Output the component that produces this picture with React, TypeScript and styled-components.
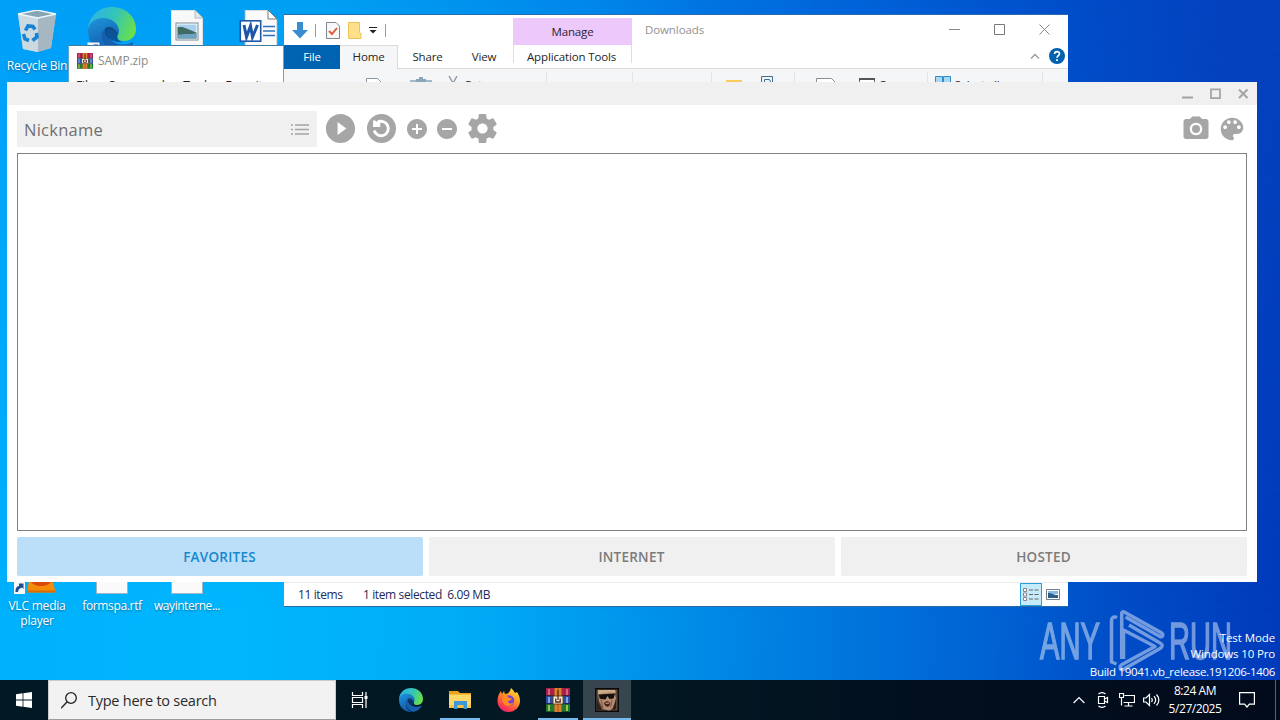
import React from "react";
import styled, { createGlobalStyle, css } from "styled-components";

const GlobalStyle = createGlobalStyle`
  * { box-sizing: border-box; }
  body {
    margin: 0;
    overflow: hidden;
    font-family: "Open Sans", "Noto Sans", sans-serif;
  }
  svg { display: block; flex: none; }
`;

/* ---------- desktop ---------- */

const Screen = styled.div`
  width: 1280px;
  height: 720px;
  display: flex;
  flex-direction: column;
  overflow: hidden;
`;

const Desktop = styled.main`
  position: relative;
  flex: 1;
  overflow: hidden;
  background: linear-gradient(93deg, #00b0fc 0%, #00b6fd 20%, #00adf7 37%, #009aee 48%, #007fe1 62%, #0062d3 78%, #004cc6 88%, #003abb 100%);
  &::before {
    content: "";
    position: absolute;
    inset: 0;
    background: linear-gradient(96deg, #009ff8 0%, #009ff3 24%, #0086ea 44%, #0070e0 54%, #0062d8 64%, #004eca 78%, #0342be 90%, #0340bc 100%);
    mask-image: linear-gradient(180deg, #000 0%, transparent 90%);
  }
`;

const Shortcut = styled.div<{ $x: number; $y: number }>`
  position: absolute;
  left: ${(p) => p.$x}px;
  top: ${(p) => p.$y}px;
  width: 76px;
  display: flex;
  flex-direction: column;
  align-items: center;
`;

const ShortcutLabel = styled.span<{ $spacing?: number }>`
  margin-top: 4px;
  color: #fff;
  font-size: 12px;
  line-height: 15px;
  text-align: center;
  white-space: nowrap;
  letter-spacing: ${(p) => p.$spacing ?? -0.2}px;
  text-shadow: 0 1px 2px rgba(0, 0, 0, 0.4);
`;

/* ---------- windows ---------- */

const Window = styled.section<{ $x: number; $y: number; $w: number; $h: number }>`
  position: absolute;
  left: ${(p) => p.$x}px;
  top: ${(p) => p.$y}px;
  width: ${(p) => p.$w}px;
  height: ${(p) => p.$h}px;
  display: flex;
  flex-direction: column;
  background: #fff;
`;

const ArchiveWindow = styled(Window)`
  border: 1px solid #3d7fa8;
  border-right-color: #8a9aa6;
  border-left-color: #5ba6d2;
`;

const ArchiveTitle = styled.div`
  display: flex;
  align-items: center;
  gap: 5px;
  height: 29px;
  padding-left: 8px;
  color: #8a8a8a;
  font-size: 12px;
  letter-spacing: -0.15px;
`;

const ArchiveMenu = styled.div`
  display: flex;
  gap: 13px;
  padding: 2px 0 0 7px;
  color: #222;
  font-size: 12px;
  line-height: 17px;
  letter-spacing: -0.15px;
`;

const ExplorerWindow = styled(Window)`
  border: solid #2b6aa8;
  border-width: 1px 0 1px 0;
`;

const ExplorerTitle = styled.header`
  display: flex;
  height: 30px;
`;

const QuickAccess = styled.div`
  display: flex;
  align-items: center;
  width: 229px;
  padding-left: 8px;
`;

const QuickIcon = styled.svg<{ $l: number }>`
  margin-left: ${(p) => p.$l}px;
`;

const Separator = styled.i<{ $l?: number; $r?: number; $h?: number }>`
  width: 1px;
  height: ${(p) => p.$h ?? 13}px;
  margin: 0 ${(p) => p.$r ?? 0}px 0 ${(p) => p.$l ?? 0}px;
  background: #9a9a9a;
`;

const ContextTab = styled.div`
  width: 119px;
  height: 27px;
  margin-top: 3px;
  background: #ecc8fb;
  color: #2b2233;
  font-size: 11.5px;
  line-height: 28px;
  letter-spacing: -0.15px;
  text-align: center;
`;

const WindowCaption = styled.span`
  flex: 1;
  padding-left: 13px;
  color: #929292;
  font-size: 11.5px;
  line-height: 30px;
  letter-spacing: -0.1px;
`;

const CaptionButtons = styled.div`
  display: flex;
  svg { margin-top: 9px; margin-right: 34px; }
  svg:last-child { margin-right: 18px; }
`;

const TabStrip = styled.nav`
  display: flex;
  height: 24px;
  border-bottom: 1px solid #dadbdc;
  color: #262626;
  font-size: 11.5px;
  line-height: 23px;
`;

const RibbonTab = styled.div<{ $w: number; $kind?: "file" | "active" | "tool"; $spacing?: number }>`
  width: ${(p) => p.$w}px;
  text-align: center;
  white-space: nowrap;
  letter-spacing: ${(p) => p.$spacing ?? -0.15}px;
  ${(p) => p.$kind === "file" && css`height: 24px; background: #0063b1; color: #fff;`}
  ${(p) => p.$kind === "active" && css`
    height: 24px;
    background: #f5f6f7;
    border: 1px solid #dadbdc;
    border-width: 1px 1px 0 0;
    line-height: 22px;
  `}
  ${(p) => p.$kind === "tool" && css`
    height: 18px;
    padding-right: 2px;
    border: solid #e0dbe4;
    border-width: 0 1px;
  `}
`;

const StripEnd = styled.div`
  display: flex;
  flex: 1;
  align-items: center;
  justify-content: flex-end;
  gap: 9px;
  padding: 0 3px 2px 0;
`;

const Ribbon = styled.div`
  display: flex;
  flex: 1;
  align-items: flex-start;
  background: #f5f6f7;
  color: #222;
  font-size: 11.5px;
  line-height: 16px;
  letter-spacing: -0.2px;
`;

const RibbonItem = styled.span<{ $l: number; $t?: number }>`
  margin: ${(p) => p.$t ?? 8}px 0 0 ${(p) => p.$l}px;
`;

const RibbonRule = styled.i<{ $l: number }>`
  width: 1px;
  height: 80px;
  margin: 3px 0 0 ${(p) => p.$l}px;
  background: #e2e3e4;
`;

const StatusBar = styled.footer`
  display: flex;
  align-items: center;
  height: 24px;
  padding: 0 8px 0 14px;
  border-top: 1px solid #ececec;
  background: #fff;
  color: #1e2a5a;
  font-size: 12px;
  letter-spacing: -0.38px;
  white-space: pre;
`;

const StatusText = styled.span<{ $w?: number }>`
  width: ${(p) => (p.$w ? `${p.$w}px` : "auto")};
`;

const ViewToggle = styled.div`
  display: flex;
  align-items: center;
  justify-content: center;
  width: 22px;
  height: 23px;
  margin: 0 4px 0 auto;
  border: 1px solid #2a9fd8;
  background: #c5ebfa;
`;

/* ---------- launcher ---------- */

const LauncherTitle = styled.header`
  display: flex;
  align-items: center;
  justify-content: flex-end;
  gap: 16px;
  height: 23px;
  padding-right: 8px;
  background: #f0f0f0;
`;

const LauncherBody = styled.div`
  display: flex;
  flex: 1;
  flex-direction: column;
  gap: 6px;
  padding: 6px 10px;
  background: #fff;
`;

const Toolbar = styled.div`
  display: flex;
  height: 36px;
  margin-right: -3px;
`;

const NicknameField = styled.div`
  display: flex;
  align-items: center;
  justify-content: space-between;
  width: 300px;
  margin-right: 3px;
  padding: 0 8px 0 7px;
  background: #f0f0f0;
  color: #707070;
  font-size: 16.5px;
  letter-spacing: 0.25px;
`;

const ToolButton = styled.div<{ $w: number; $push?: boolean }>`
  display: flex;
  align-items: center;
  justify-content: center;
  width: ${(p) => p.$w}px;
  height: 35px;
  margin-left: ${(p) => (p.$push ? "auto" : 0)};
  color: #a6a6a6;
`;

const ServerList = styled.div`
  flex: 1;
  border: 1px solid #828282;
`;

const TabRow = styled.div`
  display: grid;
  grid-template-columns: repeat(3, 1fr);
  gap: 6px;
  height: 39px;
`;

const ServerTab = styled.div<{ $active?: boolean }>`
  display: flex;
  align-items: center;
  justify-content: center;
  padding-right: 1px;
  border-radius: 2px;
  background: ${(p) => (p.$active ? "#bbdff8" : "#f0f0f0")};
  color: ${(p) => (p.$active ? "#1587cc" : "#7b7b7b")};
  font-size: 13.5px;
  font-weight: 600;
  letter-spacing: 0.25px;
`;

/* ---------- overlays on the wallpaper ---------- */

const BuildInfo = styled.div`
  position: absolute;
  right: 5px;
  top: 630px;
  display: flex;
  flex-direction: column;
  align-items: flex-end;
  color: #fff;
  font-size: 11.5px;
  line-height: 16px;
  white-space: nowrap;
`;

const BuildLine = styled.span<{ $gap?: number; $spacing?: number }>`
  margin-top: ${(p) => p.$gap ?? 0}px;
  letter-spacing: ${(p) => p.$spacing ?? -0.1}px;
`;

const Watermark = styled.div`
  position: absolute;
  left: 1036px;
  top: 608px;
`;

/* ---------- taskbar ---------- */

const Taskbar = styled.footer`
  display: flex;
  height: 40px;
  background: linear-gradient(90deg, #011924 0%, #021722 50%, #020f1e 75%, #020b1b 100%);
`;

const StartButton = styled.div`
  display: flex;
  align-items: center;
  justify-content: center;
  width: 48px;
`;

const SearchBox = styled.div`
  display: flex;
  align-items: center;
  gap: 11px;
  width: 288px;
  padding: 0 0 0 12px;
  border: 1px solid #c9cccd;
  border-bottom-color: #9b9d9e;
  background: #f2f2f2;
  color: #2a2a2a;
  font-size: 14.5px;
  letter-spacing: -0.25px;
`;

const TaskButton = styled.div<{ $state?: "open" | "active"; $gap?: number }>`
  display: flex;
  flex-direction: column;
  align-items: center;
  justify-content: space-between;
  width: 48px;
  height: 40px;
  margin-right: ${(p) => p.$gap ?? 1}px;
  padding-top: 8px;
  background: ${(p) => (p.$state === "active" ? "#37464e" : "transparent")};
  &::after {
    content: "";
    width: ${(p) => (p.$state === "active" ? 48 : 40)}px;
    height: 2px;
    background: ${(p) => (p.$state ? "#76b9ed" : "transparent")};
  }
`;

const Tray = styled.div`
  display: flex;
  align-items: center;
  margin-left: auto;
`;

const TrayIcon = styled.div<{ $r: number }>`
  margin-right: ${(p) => p.$r}px;
`;

const Clock = styled.div`
  display: flex;
  flex-direction: column;
  align-items: center;
  width: 64px;
  margin-right: 12px;
  color: #fff;
  font-size: 12px;
  line-height: 18px;
  letter-spacing: -0.45px;
  white-space: nowrap;
`;

const PeekEdge = styled.i`
  width: 1px;
  height: 40px;
  margin: 0 4px 0 20px;
  background: #5a636c;
`;

/* ---------- drawings ---------- */

const EdgeLogo = ({ size }: { size: number }) => (
  <svg width={size} height={size} viewBox="0 0 48 48">
    <defs>
      <linearGradient id={`ea${size}`} x1="0" y1="0.3" x2="1" y2="0.6">
        <stop offset="0" stopColor="#2fb3e6" />
        <stop offset="0.5" stopColor="#33c5b8" />
        <stop offset="1" stopColor="#6be047" />
      </linearGradient>
      <linearGradient id={`eb${size}`} x1="0" y1="0" x2="0.4" y2="1">
        <stop offset="0" stopColor="#1f97dc" />
        <stop offset="1" stopColor="#1157a8" />
      </linearGradient>
    </defs>
    <path d="M24 0C11 0 1 9 0 22c4-7 11-10 18-9 9 1 14 8 12 15-1 3 0 6 6 6 8 0 12-6 12-12C48 9 37 0 24 0Z" fill={`url(#ea${size})`} />
    <path d="M0 24c0-8 7-13 15-13 9 0 16 6 16 13 0 2-1 4-2 5-1-4-5-6-8-6-4 0-8 4-7 11 1 6 5 11 11 14C11 49 0 38 0 24Z" fill={`url(#eb${size})`} />
    <path d="M17 22c-6 5-4 21 11 26 7-1 13-5 17-11 1-2-1-2-2-1-9 4-23 1-26-14Z" fill="#155fae" />
    <path d="M17 22c1-3 6-3 9 0 3 2 4 5 3 7 0 2 1 5 6 6-9 1-19-4-18-13Z" fill="#0c3c78" opacity="0.75" />
  </svg>
);

const ShortcutArrow = styled.svg`
  position: absolute;
  left: 13px;
  bottom: 0;
`;

const RecycleBin = () => (
  <svg width="40" height="44" viewBox="0 0 40 44">
    <path d="M1 4 20 0l19 4-5 34-14 4-14-3Z" fill="#b9cad4" />
    <path d="m1 4 20 3v35l-15-3Z" fill="#cbd9e1" />
    <path d="m21 7 18-3-5 34-13 4Z" fill="#a7b7c1" />
    <path d="m1 4 19-4 19 4-18 4Z" fill="#87a6b5" stroke="#edf6fa" strokeWidth="1.3" />
    <g fill="none" stroke="#1683d4" strokeWidth="3.6">
      <path d="m8.500 20.500 2.500-4.500 5 .5 2 3" />
      <path d="m19.500 23 .5 4-4.500 3.500" />
      <path d="M12 30.500 8 29l-1.500-5" />
    </g>
  </svg>
);

const ImageFile = () => (
  <svg width="32" height="40" viewBox="0 0 32 40">
    <path d="M0 0h24l8 8v32H0Z" fill="#f8f8f8" stroke="#b8c0c6" strokeWidth="0.8" />
    <path d="M24 0v8h8Z" fill="#dfe7ec" stroke="#9fb0bb" strokeWidth="0.8" />
    <rect x="5" y="13" width="22" height="17" fill="#fff" stroke="#7d8a94" />
    <rect x="6.500" y="14.500" width="19" height="7" fill="#a8d0ee" />
    <path d="m6.500 17 5 0 14 5.500v6h-19Z" fill="#3f6b62" />
    <path d="M6.500 25c6-2 13 0 19-2v5.500h-19Z" fill="#6fa3c4" />
  </svg>
);

const WordFile = () => (
  <svg width="40" height="40" viewBox="0 0 40 40">
    <path d="M6 0h23l9 9v31H6Z" fill="#fbfbfb" stroke="#aab4bb" strokeWidth="0.8" />
    <path d="M29 0v9h9Z" fill="#fff" stroke="#777" strokeWidth="1" />
    <path d="M24 16.500h12M24 21h12M24 25.500h12" stroke="#2b72c4" strokeWidth="1.3" />
    <rect x="1.300" y="10.800" width="20.400" height="20.400" fill="#fff" stroke="#1f57a8" strokeWidth="1.6" />
    <path d="m5 15 2.500 12L11.500 16l2 11L18.500 15" fill="none" stroke="#1f57a8" strokeWidth="3" />
  </svg>
);

const VlcBase = () => (
  <svg width="46" height="16" viewBox="0 0 46 16">
    <path d="m15 2 23 0 4 12.500H13Z" fill="#f58b0a" />
    <path d="M16 2h22c-3 8-19 8-22 0Z" fill="#d9480c" />
    <path d="M13 12.500h28.500l.5 2H13Z" fill="#d76c06" />
    <rect x="-1" y="4" width="12" height="12" fill="#f5f7f8" />
    <path d="M1.500 14c0-4 1-5.500 3.500-6V5.500h4.500V11L8 9.500c-3 1-3.500 2-4 4.500Z" fill="#1b4e91" />
  </svg>
);

const Page = () => (
  <svg width="32" height="14" viewBox="0 0 32 14">
    <path d="M.5 0v13.500h31V0Z" fill="#fafafa" stroke="#9fb6c2" />
  </svg>
);

const Books = ({ size }: { size: number }) => (
  <svg width={size} height={size} viewBox="0 0 24 24">
    <rect x="0" y="0" width="24" height="7.700" fill="#a81f4c" />
    <rect x="0" y="8" width="24" height="7.700" fill="#2c4ea6" />
    <rect x="0" y="16" width="24" height="7.700" fill="#1f7a32" />
    <path d="M0 7.800h24M0 15.800h24" stroke="#1c1a2c" strokeWidth="0.7" />
    <path d="M3 1v6M21 1v6" stroke="#e06a86" strokeWidth="1.800" />
    <path d="M3 9v6M21 9v6" stroke="#86b0ec" strokeWidth="1.800" />
    <path d="M3 17v6M21 17v6" stroke="#b5c84a" strokeWidth="1.800" />
    <rect x="8.300" y="0" width="7.400" height="24" fill="#c9681f" />
    <path d="M10 0v24M14 0v24" stroke="#eda63c" strokeWidth="0.9" />
    <rect x="7" y="8" width="10" height="8" fill="#efead8" stroke="#5d3a14" strokeWidth="0.9" />
    <path d="M9.800 10.500v3.500h4.400v-3.500M12 2v10" stroke="#5c2b10" strokeWidth="1.300" fill="none" />
  </svg>
);

const WatermarkLogo = () => (
  <svg width="240" height="70" viewBox="0 0 240 70">
    <g fill="#fff" stroke="#fff" strokeWidth="1.500" opacity="0.45" fontFamily="Liberation Sans, sans-serif" fontSize="51">
      <text x="4" y="51" textLength="60" lengthAdjust="spacingAndGlyphs">ANY</text>
      <text x="133" y="51" textLength="63" lengthAdjust="spacingAndGlyphs">RUN</text>
    </g>
    <path
      d="M81 9.500c-3-1.500-5.500 0-5.500 3V54l5 2M85.700 51V5.500c0-1.500 1-2 2.500-1.500L125 24.500c3 2 2 5-1 4L89.500 9M87.500 51V22L119 38.500 86 56.500c-3 2-2 6 1 5l37-21c3-2 3-4 0-5.500L93 17"
      fill="none" stroke="#fff" strokeWidth="3.500" opacity="0.45" strokeLinejoin="round"
    />
  </svg>
);

const Firefox = () => (
  <svg width="24" height="24" viewBox="0 0 24 24">
    <defs>
      <linearGradient id="fx" x1="0.8" y1="0" x2="0.2" y2="1">
        <stop offset="0" stopColor="#ffe640" />
        <stop offset="0.4" stopColor="#ff9422" />
        <stop offset="0.8" stopColor="#fb3a50" />
        <stop offset="1" stopColor="#e0207a" />
      </linearGradient>
    </defs>
    <path d="M14 0c2 2 3 3 4 5l2-1c2 3 3 6 3 9 0 6-5 11-11.500 11S.5 19 .5 13c0-4 1-7 3.500-10l1 3 2-3 1 3c3 0 5-2 6-6Z" fill="url(#fx)" />
    <circle cx="12" cy="12.500" r="5.200" fill="#7542d8" />
    <path d="M6 8c3-1 5 0 6 2l3 .5c-1 2-3 2-4 3 0 2 3 3 5 1-1 4-8 5-10 0-1-2-1-4 0-6.500Z" fill="#ff8a1e" />
  </svg>
);

const ExplorerFolder = () => (
  <svg width="24" height="24" viewBox="0 0 24 24">
    <path d="M1 3h9l2 2h11v4H1Z" fill="#e9a21b" />
    <path d="M1 6.500h22V20H1Z" fill="#fdd768" />
    <path d="M1 17h22v3H1Z" fill="#f7c54a" />
    <path d="M6 13h13v8h-3.500v-4h-6v4H6Z" fill="#3d97d8" />
  </svg>
);

const Portrait = () => (
  <svg width="24" height="24" viewBox="0 0 24 24">
    <rect x="0.7" y="0.7" width="22.600" height="22.600" fill="#5a463c" stroke="#0a0808" strokeWidth="1.4" />
    <path d="M5 3h14l2 7-2 10-5 2.500-6-1.500L4 13Z" fill="#b58e72" />
    <path d="M3 2h17l1 3-6-1-8 1-4 4Z" fill="#c9ab88" />
    <path d="M3 6.500 20 5.500l-1.500 5-4 .5-2-3-2 3.500-5-.5Z" fill="#15100f" />
    <path d="M9 15c2-2.500 4.500-2.500 6 0 0 5-5 5-6 0Z" fill="#4f1e1b" />
    <path d="M10.500 15.200h3.500" stroke="#e8c9b4" strokeWidth="0.9" />
    <path d="M6 12l2 8M17 12l-1.500 7" stroke="#80604c" strokeWidth="1.300" />
    <path d="M2 11v11h5l-3-6ZM21 11v10l-4 1 2-5Z" fill="#2c211d" />
  </svg>
);

const MdIcon = ({ size, d }: { size: number; d: string }) => (
  <svg width={size} height={size} viewBox="0 0 24 24" fill="currentColor">
    <path d={d} />
  </svg>
);

const PLAY = "M12 2C6.480 2 2 6.480 2 12s4.480 10 10 10 10-4.480 10-10S17.520 2 12 2zm-2 14.500v-9l6 4.500-6 4.500z";
const ADD = "M12 2C6.480 2 2 6.480 2 12s4.480 10 10 10 10-4.480 10-10S17.520 2 12 2zm5 11h-4v4h-2v-4H7v-2h4V7h2v4h4v2z";
const REMOVE = "M12 2C6.480 2 2 6.480 2 12s4.480 10 10 10 10-4.480 10-10S17.520 2 12 2zm5 11H7v-2h10v2z";
const GEAR =
  "M19.430 12.980c.04-.32.070-.64.070-.98s-.03-.66-.070-.98l2.110-1.650c.19-.15.240-.42.120-.64l-2-3.460c-.12-.22-.39-.3-.61-.22l-2.490 1c-.52-.4-1.080-.73-1.690-.98l-.38-2.650C14.460 2.180 14.250 2 14 2h-4c-.25 0-.46.180-.49.420l-.38 2.650c-.61.250-1.170.59-1.690.98l-2.490-1c-.23-.09-.49 0-.61.220l-2 3.460c-.13.220-.07.490.120.640l2.110 1.650c-.04.320-.07.650-.07.980s.03.660.070.980l-2.110 1.650c-.19.150-.24.420-.12.640l2 3.460c.12.220.39.300.61.220l2.490-1c.52.400 1.080.730 1.690.980l.38 2.650c.03.240.240.420.490.420h4c.25 0 .46-.18.490-.42l.38-2.650c.61-.25 1.170-.59 1.690-.98l2.490 1c.23.090.490 0 .61-.22l2-3.460c.12-.22.070-.49-.12-.64l-2.110-1.650zM12 15.500c-1.930 0-3.500-1.570-3.500-3.500s1.570-3.500 3.500-3.500 3.500 1.570 3.500 3.500-1.570 3.500-3.500 3.500z";
const CAMERA =
  "M9 2L7.170 4H4c-1.100 0-2 .9-2 2v12c0 1.100.9 2 2 2h16c1.100 0 2-.9 2-2V6c0-1.100-.9-2-2-2h-3.170L15 2H9zm3 15c-2.760 0-5-2.240-5-5s2.240-5 5-5 5 2.240 5 5-2.240 5-5 5zm0-1.800a3.200 3.200 0 1 0 0-6.400 3.200 3.200 0 0 0 0 6.400z";
const PALETTE =
  "M12 3c-4.970 0-9 4.030-9 9s4.030 9 9 9c.83 0 1.500-.67 1.500-1.500 0-.39-.15-.74-.39-1.010-.23-.26-.38-.61-.38-.99 0-.83.670-1.500 1.500-1.500H16c2.760 0 5-2.240 5-5 0-4.420-4.030-8-9-8zm-5.500 9c-.83 0-1.500-.67-1.500-1.500S5.670 9 6.500 9 8 9.670 8 10.500 7.330 12 6.500 12zm3-4C8.670 8 8 7.330 8 6.500S8.670 5 9.500 5s1.500.67 1.500 1.500S10.330 8 9.500 8zm5 0c-.83 0-1.500-.67-1.500-1.500S13.670 5 14.500 5s1.500.67 1.500 1.500S15.330 8 14.500 8zm3 4c-.83 0-1.500-.67-1.500-1.500S16.670 9 17.500 9s1.500.67 1.500 1.500-.67 1.500-1.500 1.500z";

const ReloadIcon = () => (
  <svg width="29" height="29" viewBox="0 0 29 29">
    <circle cx="14.500" cy="14.500" r="14.500" fill="currentColor" />
    <path d="M7.200 16.500a7.200 7.200 0 1 0 3-8" fill="none" stroke="#fff" strokeWidth="2.900" />
    <path d="M6 6.500h2.500l.8 1.500 4-1V13H6Z" fill="#fff" />
  </svg>
);

const ListIcon = () => (
  <svg width="18" height="11" viewBox="0 0 18 11" stroke="#a3a3a3" strokeWidth="1.600">
    <path d="M0 1h2M4 1h14M0 5.500h2M4 5.500h14M0 10h2M4 10h14" />
  </svg>
);

/* ---------- page ---------- */

function Shortcuts() {
  return (
    <>
      <Shortcut $x={-1} $y={10}><RecycleBin /><ShortcutLabel>Recycle Bin</ShortcutLabel></Shortcut>
      <Shortcut $x={74} $y={7}>
        <EdgeLogo size={48} />
        <ShortcutArrow width="13" height="13" viewBox="0 0 13 13">
          <path d="M.5.500h12v12H.500Z" fill="#f5f7f8" />
          <path d="M3 11c0-4 1-5.500 3.500-6V2.500h4.500V8L9.500 6.500c-3 1-3.500 2-4 4.500Z" fill="#1b4e91" />
        </ShortcutArrow>
      </Shortcut>
      <Shortcut $x={149} $y={10}><ImageFile /></Shortcut>
      <Shortcut $x={221} $y={10}><WordFile /></Shortcut>
      <Shortcut $x={-1} $y={578}><VlcBase /><ShortcutLabel>VLC media<br />player</ShortcutLabel></Shortcut>
      <Shortcut $x={74} $y={580}><Page /><ShortcutLabel $spacing={-0.35}>formspa.rtf</ShortcutLabel></Shortcut>
      <Shortcut $x={149} $y={580}><Page /><ShortcutLabel $spacing={-0.45}>wayinterne...</ShortcutLabel></Shortcut>
    </>
  );
}

function Archive() {
  return (
    <ArchiveWindow $x={68} $y={45} $w={216} $h={300}>
      <ArchiveTitle><Books size={16} />SAMP.zip</ArchiveTitle>
      <ArchiveMenu>
        <span>File</span><span>Commands</span><span>Tools</span><span>Favorites</span>
      </ArchiveMenu>
    </ArchiveWindow>
  );
}

function Explorer() {
  return (
    <ExplorerWindow $x={284} $y={14} $w={784} $h={593}>
      <ExplorerTitle>
        <QuickAccess>
          <QuickIcon $l={0} width="16" height="17" viewBox="0 0 16 17"><path d="M5 0h6v8h5l-8 8.500L0 8h5Z" fill="#3a8cd2" /></QuickIcon>
          <Separator $l={7} $r={10} />
          <QuickIcon $l={0} width="14" height="17" viewBox="0 0 14 17">
            <path d="M.5.500h9.500l3.500 3.500v12.500H.500Z" fill="#f7f7fa" stroke="#85858f" />
            <path d="m3 9 3 3 5-6" fill="none" stroke="#df5a32" strokeWidth="1.900" />
          </QuickIcon>
          <QuickIcon $l={8} width="14" height="17" viewBox="0 0 14 17">
            <path d="M.5.500h11v10l1.500 1v5H.500Z" fill="#ffe08a" stroke="#eec25a" />
          </QuickIcon>
          <QuickIcon $l={7} width="8" height="7" viewBox="0 0 8 7">
            <path d="M0 .500h8" stroke="#222" /><path d="M.5 3h7L4 6.500Z" fill="#222" />
          </QuickIcon>
          <Separator $l={8} />
        </QuickAccess>
        <ContextTab>Manage</ContextTab>
        <WindowCaption>Downloads</WindowCaption>
        <CaptionButtons>
          <svg width="11" height="11" viewBox="0 0 11 11"><path d="M0 5.500h11" stroke="#888" /></svg>
          <svg width="11" height="11" viewBox="0 0 11 11"><path d="M.5.500h10v10H.500Z" stroke="#777" fill="none" /></svg>
          <svg width="11" height="11" viewBox="0 0 11 11"><path d="m.5.500 10 10m0-10-10 10" stroke="#888" /></svg>
        </CaptionButtons>
      </ExplorerTitle>
      <TabStrip>
        <RibbonTab $w={56} $kind="file">File</RibbonTab>
        <RibbonTab $w={58} $kind="active">Home</RibbonTab>
        <RibbonTab $w={59}>Share</RibbonTab>
        <RibbonTab $w={54} $spacing={-0.1}>View</RibbonTab>
        <i style={{ width: 2 }} />
        <RibbonTab $w={119} $kind="tool">Application Tools</RibbonTab>
        <StripEnd>
          <svg width="10" height="6" viewBox="0 0 10 6"><path d="m1 5.500 4-4 4 4" fill="none" stroke="#9a9a9a" strokeWidth="1.300" /></svg>
          <svg width="16" height="16" viewBox="0 0 16 16">
            <circle cx="8" cy="8" r="8" fill="#0061b0" />
            <path d="M5.600 6c0-3.300 5-3.200 4.900-.2C10.400 7.600 8 7.700 8 9.800" fill="none" stroke="#fff" strokeWidth="1.700" />
            <rect x="7.100" y="11.200" width="1.800" height="1.800" fill="#fff" />
          </svg>
        </StripEnd>
      </TabStrip>
      <Ribbon>
        <RibbonItem $l={82} $t={9}>
          <svg width="16" height="20" viewBox="0 0 16 20"><path d="M.5.500h11l4 4v16H.500Z" fill="#fff" stroke="#8b99a6" /></svg>
        </RibbonItem>
        <RibbonItem $l={28} $t={8}>
          <svg width="22" height="20" viewBox="0 0 22 20"><path d="M0 3h22v17H0Z" fill="#a3b8c8" /><path d="M6 5V2h3V0h4v2h3v3Z" fill="#8ba5b8" /></svg>
        </RibbonItem>
        <RibbonItem $l={16} $t={7}>
          <svg width="10" height="14" viewBox="0 0 10 14"><path d="m1 0 5 9M9 0 4 9" stroke="#8c98a5" strokeWidth="1.400" /></svg>
        </RibbonItem>
        <RibbonItem $l={6}>Cut</RibbonItem>
        <RibbonRule $l={64} />
        <RibbonRule $l={85} />
        <RibbonRule $l={78} />
        <RibbonItem $l={14} $t={11}>
          <svg width="16" height="14" viewBox="0 0 16 14"><path d="M0 0h16v14H0Z" fill="#f7cc60" /></svg>
        </RibbonItem>
        <RibbonItem $l={19} $t={7}>
          <svg width="12" height="16" viewBox="0 0 12 16"><path d="M.5.500h11v15H.500Z" fill="#eef4f8" stroke="#3f6e8e" /><path d="M3.500 6V3.500h5l1 2.500" fill="none" stroke="#3f6e8e" /></svg>
        </RibbonItem>
        <RibbonRule $l={21} />
        <RibbonItem $l={21} $t={9}>
          <svg width="20" height="16" viewBox="0 0 20 16"><path d="M.5.500h15l4 4v12H.500Z" fill="#fff" stroke="#8c8f92" /></svg>
        </RibbonItem>
        <RibbonItem $l={23} $t={9}>
          <svg width="16" height="16" viewBox="0 0 16 16"><path d="M.5.500h15v15H.500Z" fill="#fff" stroke="#666" /><path d="M0 1h16" stroke="#555" strokeWidth="2" /></svg>
        </RibbonItem>
        <RibbonItem $l={4}>Open</RibbonItem>
        <RibbonRule $l={19} />
        <RibbonItem $l={7} $t={7}>
          <svg width="16" height="16" viewBox="0 0 16 16"><path d="M.5.500h7v15h-7zM8.500.500h7v15h-7z" fill="#a9d8f7" stroke="#3389cb" /></svg>
        </RibbonItem>
        <RibbonItem $l={4}>Select all</RibbonItem>
        <RibbonRule $l={43} />
      </Ribbon>
      <StatusBar>
        <StatusText $w={65}>11 items</StatusText>
        <StatusText>{"1 item selected  6.09 MB"}</StatusText>
        <ViewToggle>
          <svg width="16" height="13" viewBox="0 0 16 13">
            <path d="M.5.500h3v3h-3zM.5 5h3v3h-3zM.5 9.500h3v3h-3z" fill="#fff" stroke="#8c8488" />
            <path d="M6 2h4M11.500 2h4M6 6.500h4M11.500 6.500h4M6 11h4M11.500 11h4" stroke="#666" />
          </svg>
        </ViewToggle>
        <svg width="14" height="11" viewBox="0 0 14 11">
          <path d="M.5.500h13v10H.500Z" fill="#fff" stroke="#777f88" />
          <path d="M2 2h10v3H2z" fill="#86b9e4" /><path d="M2 4c4 0 5 2 10 2v3H2Z" fill="#2d5f86" />
        </svg>
      </StatusBar>
    </ExplorerWindow>
  );
}

function Launcher() {
  return (
    <Window $x={7} $y={82} $w={1250} $h={500}>
      <LauncherTitle>
        <svg width="12" height="12" viewBox="0 0 12 12"><path d="M1 9.500h11" stroke="#a3a3a3" strokeWidth="2" /></svg>
        <svg width="12" height="12" viewBox="0 0 12 12"><path d="M2 1.300h9v8.900H2Z" fill="none" stroke="#a3a3a3" strokeWidth="1.700" /></svg>
        <svg width="12" height="12" viewBox="0 0 12 12"><path d="m2 1.500 8.500 8.500M10.500 1.500 2 10" stroke="#a3a3a3" strokeWidth="1.900" /></svg>
      </LauncherTitle>
      <LauncherBody>
        <Toolbar>
          <NicknameField>Nickname<ListIcon /></NicknameField>
          <ToolButton $w={41}><MdIcon size={35} d={PLAY} /></ToolButton>
          <ToolButton $w={41}><ReloadIcon /></ToolButton>
          <ToolButton $w={30}><MdIcon size={24} d={ADD} /></ToolButton>
          <ToolButton $w={30}><MdIcon size={24} d={REMOVE} /></ToolButton>
          <ToolButton $w={41}><MdIcon size={35} d={GEAR} /></ToolButton>
          <ToolButton $w={36} $push><MdIcon size={30} d={CAMERA} /></ToolButton>
          <ToolButton $w={36}><MdIcon size={30} d={PALETTE} /></ToolButton>
        </Toolbar>
        <ServerList />
        <TabRow>
          <ServerTab $active>FAVORITES</ServerTab>
          <ServerTab>INTERNET</ServerTab>
          <ServerTab>HOSTED</ServerTab>
        </TabRow>
      </LauncherBody>
    </Window>
  );
}

function SystemBar() {
  return (
    <Taskbar>
      <StartButton>
        <svg width="16" height="16" viewBox="0 0 16 16" fill="#fff">
          <path d="M0 2.200 6.600 1.300v6.300H0zM7.400 1.200 16 0v7.600H7.400zM0 8.400h6.600v6.300L0 13.800zM7.400 8.400H16V16l-8.600-1.200z" />
        </svg>
      </StartButton>
      <SearchBox>
        <svg width="16" height="17" viewBox="0 0 16 17">
          <circle cx="10" cy="6" r="5.300" fill="none" stroke="#222" strokeWidth="1.300" />
          <path d="M6.200 9.800 0 16.300" stroke="#222" strokeWidth="1.400" />
        </svg>
        Type here to search
      </SearchBox>
      <TaskButton $gap={3}>
        <svg width="18" height="24" viewBox="0 0 18 24">
          <path d="M1.500 4v3.500h10V4M1.500 20v-3.500h10V20M1.500 9.500h10v5h-10zM15 4v16" fill="none" stroke="#fff" strokeWidth="1.200" />
          <path d="M13.500 8h3v3h-3z" fill="#fff" />
        </svg>
      </TaskButton>
      <TaskButton><EdgeLogo size={24} /></TaskButton>
      <TaskButton $state="open"><ExplorerFolder /></TaskButton>
      <TaskButton><Firefox /></TaskButton>
      <TaskButton $state="open"><Books size={24} /></TaskButton>
      <TaskButton $state="active"><Portrait /></TaskButton>
      <Tray>
        <TrayIcon $r={12}>
          <svg width="12" height="8" viewBox="0 0 12 8"><path d="m.6 7 5.400-5.500L11.400 7" fill="none" stroke="#fff" strokeWidth="1.200" /></svg>
        </TrayIcon>
        <TrayIcon $r={10}>
          <svg width="12" height="16" viewBox="0 0 12 16" fill="none" stroke="#fff" strokeWidth="1.200">
            <path d="M1.500 4.500h6v7h-6zM7.500 7l3-1.500v5l-3-1.500M1.500 2c2-1.600 5-1.600 7 0M1.500 14c2 1.600 5 1.600 7 0" />
          </svg>
        </TrayIcon>
        <TrayIcon $r={8}>
          <svg width="16" height="14" viewBox="0 0 16 14" fill="none" stroke="#fff" strokeWidth="1.200">
            <path d="M5.500 2.500h10v7h-11M.5.500h4v4h-4zM2.500 4.500v8M9.500 9.500v3.500M5.500 13h8" />
          </svg>
        </TrayIcon>
        <TrayIcon $r={3}>
          <svg width="17" height="14" viewBox="0 0 17 14" fill="none" stroke="#fff" strokeWidth="1.200">
            <path d="M.6 5v4h2.400l3.500 3.500v-11L3 5ZM8.500 5c1 1.300 1 2.700 0 4M11 3.200c2 2.300 2 5.300 0 7.600M13.500 1.500c3 3.500 3 7.500 0 11" />
          </svg>
        </TrayIcon>
        <Clock><span>8:24 AM</span><span>5/27/2025</span></Clock>
        <svg width="16" height="16" viewBox="0 0 16 16"><path d="M.6.600h14.800v11.500h-5L8 15l-2.400-2.900h-5Z" fill="none" stroke="#fff" strokeWidth="1.200" /></svg>
        <PeekEdge />
      </Tray>
    </Taskbar>
  );
}

export default function App() {
  return (
    <Screen>
      <GlobalStyle />
      <Desktop>
        <Shortcuts />
        <Archive />
        <Explorer />
        <Launcher />
        <Watermark><WatermarkLogo /></Watermark>
        <BuildInfo>
          <BuildLine>Test Mode</BuildLine>
          <BuildLine $spacing={-0.15}>Windows 10 Pro</BuildLine>
          <BuildLine $gap={2} $spacing={-0.3}>Build 19041.vb_release.191206-1406</BuildLine>
        </BuildInfo>
      </Desktop>
      <SystemBar />
    </Screen>
  );
}
